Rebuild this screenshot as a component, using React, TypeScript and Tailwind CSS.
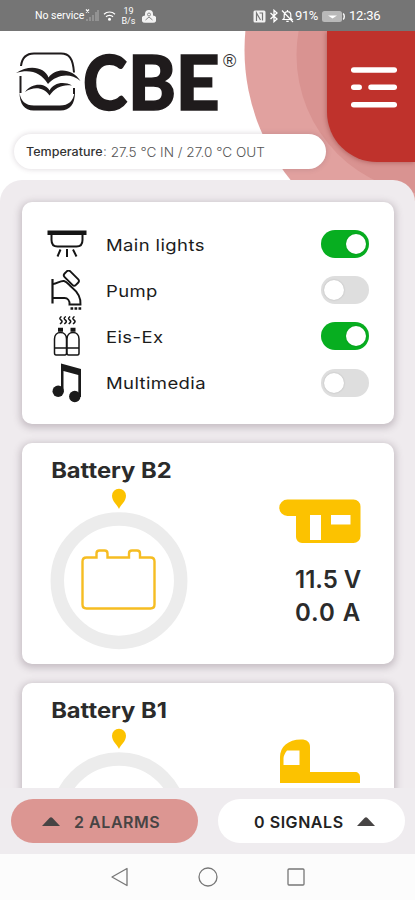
import type { ReactNode } from "react";

function StatusBar() {
  return (
    <div className="flex h-[31px] shrink-0 items-center bg-[#757575] pt-px pl-[35px] font-['Roboto',sans-serif] text-white">
      <span className="w-[50px] whitespace-nowrap text-[10.5px]">No service</span>
      <svg width="14" height="16" viewBox="0 0 14 16" className="shrink-0">
        <path d="M1 1.500l3 3M4 1.500l-3 3" stroke="#fff" strokeWidth="1.200" />
        <path
          d="M2 13v-2M5 13v-4M8 13V7M11 13V4M13 13V2"
          stroke="#9a9a9a"
          strokeWidth="1.600"
        />
      </svg>
      <svg
        width="13"
        height="12"
        viewBox="0 0 13 12"
        className="ml-[4px] shrink-0"
        fill="none"
        stroke="#fff"
        strokeWidth="1.200"
      >
        <path d="M1 4.200a8 8 0 0 1 11 0M3 6.800a5 5 0 0 1 7 0" />
        <circle cx="6.500" cy="9.300" r="1.500" fill="#fff" stroke="none" />
      </svg>
      <span className="ml-[4px] w-[17px] text-center text-[9px] leading-[10px]">
        19
        <br />
        B/s
      </span>
      <svg width="14" height="15" viewBox="0 0 14 15" className="ml-[5px] shrink-0">
        <path
          d="M7 1a4 4 0 0 1 4 4v1.500a3.600 3.600 0 0 1-.3 7.200H3.300a3.600 3.600 0 0 1-.3-7.200V5a4 4 0 0 1 4-4z"
          fill="#f2f2f2"
        />
        <circle cx="7" cy="5.500" r="1.500" fill="none" stroke="#8a8a8a" />
        <path d="M3.500 11l3.500-3 3.500 3" fill="none" stroke="#8a8a8a" />
      </svg>
      <svg width="13" height="13" viewBox="0 0 13 13" className="ml-[97px] shrink-0">
        <rect x="0.500" y="0.500" width="12" height="12" rx="1.500" fill="#f2f2f2" />
        <path
          d="M3.500 11V3l4 7M6.500 3h3v7.500"
          fill="none"
          stroke="#757575"
          strokeWidth="1.200"
        />
      </svg>
      <svg
        width="10"
        height="14"
        viewBox="0 0 10 14"
        className="ml-[3px] shrink-0"
        fill="none"
        stroke="#fff"
        strokeWidth="1.300"
      >
        <path d="M1.500 4l6.500 6-3 2.700V1.300L8 4l-6.500 6" />
      </svg>
      <svg
        width="13"
        height="14"
        viewBox="0 0 13 14"
        className="ml-[2px] shrink-0"
        fill="none"
        stroke="#fff"
        strokeWidth="1.200"
      >
        <path d="M2 10.500h9L9.800 9V6a3.300 3.300 0 0 0-6.600 0v3zM6.500 1v1.500M5.300 12.400h2.400M1 1.500l11 11.500" />
      </svg>
      <span className="ml-px w-[25px] whitespace-nowrap text-[13px] tracking-[-0.400px]">
        91%
      </span>
      <svg width="23" height="11" viewBox="0 0 23 11" className="ml-[2px] shrink-0">
        <rect width="20" height="11" rx="2.500" fill="#b9b9b9" />
        <path d="M21.200 2.500c1.400 1.500 1.400 4.500 0 6" fill="none" stroke="#fff" strokeWidth="1.400" />
        <path d="M6 4.500h9l-4.500 3z" fill="#fff" />
      </svg>
      <span className="ml-[4px] whitespace-nowrap text-[13px] tracking-[-0.200px]">12:36</span>
    </div>
  );
}

function Logo() {
  return (
    <svg width="224" height="84" viewBox="0 0 224 84" className="-mb-5 block overflow-visible">
      <g fill="none" stroke="#1f1b1c" strokeWidth="2">
        <path d="M6 17C7 8.500 11 4.500 19 4.500h27c8 0 12 4.500 13 19" />
        <path d="M5.500 27v17M59 39v6" />
      </g>
      <path
        d="M4.500 43c1 9 6 13.500 14.500 13.500h26c8.500 0 13.500-4.500 14.500-13.500h.5C60 55 55 61.500 45.500 61.500h-27C9.500 61.500 4.500 55 4.500 43z"
        fill="#1f1b1c"
      />
      <path
        d="M1 24c13-9 29-6 32.500 4.500C41 18.500 57 19 65.500 32 55 23.500 42 25.500 33 35 26 23.500 15 19.500 1 24z"
        fill="#1f1b1c"
      />
      <path
        d="M10 43c7-9.500 20.500-9 24.500-1.500C38.500 34 48.500 32 57 36.500c-9-1.500-17 2-22.500 10C29 38.500 19 37 10 43z"
        fill="#1f1b1c"
      />
      <g
        fontSize="77"
        fontWeight="900"
        fontFamily="Lato, sans-serif"
        fill="#1f1b1c"
        stroke="#1f1b1c"
        strokeWidth="1.500"
      >
        <text transform="translate(68 60.500) scale(.87 1)">C</text>
        <text transform="translate(113 60.500) scale(.94 1)">B</text>
        <text transform="translate(160.500 60.500)">E</text>
      </g>
      <text x="208" y="17.500" fontSize="18" fontFamily="Liberation Sans, sans-serif" fill="#333">
        ®
      </text>
    </svg>
  );
}

function MenuButton() {
  return (
    <button className="flex h-[131px] w-[88px] shrink-0 items-start justify-center rounded-bl-[50px] bg-[#bf322c] pt-[35px] pl-[5px] shadow-[-1px_1px_4px_rgba(120,30,30,0.35)]">
      <svg width="46" height="42" viewBox="0 0 46 42" fill="none" stroke="#fff" strokeWidth="5.500" strokeLinecap="round">
        <path d="M2.700 4h40.600M2.700 21.300h5.500M20 21.300h23.300M2.700 38.700h40.600" />
      </svg>
    </button>
  );
}

function Header() {
  return (
    <header className="relative flex h-[170px] justify-between overflow-hidden bg-white">
      <svg width="415" height="170" viewBox="0 31 415 170" className="absolute inset-0">
        <circle cx="451" cy="50" r="206.500" fill="#e1a19f" />
        <circle cx="436" cy="55" r="139.500" fill="#d99391" />
      </svg>
      <div className="relative flex flex-col">
        <div className="pt-[18px] pl-[15px]">
          <Logo />
        </div>
        <div className="mt-[21px] ml-[14px] flex h-[35px] w-[312px] items-center rounded-full bg-white pt-[2px] pl-[12px] shadow-[0_0_5px_1px_rgba(90,60,80,0.16)]">
          <span className="w-[77px] origin-left scale-x-[1.090] text-[11.500px] font-medium whitespace-nowrap text-[#333]">
            Temperature
          </span>
          <span className="origin-left scale-x-[1.070] text-[12.700px] font-light whitespace-pre text-[#555]">
            : 27.5 °C IN / 27.0 °C OUT
          </span>
        </div>
      </div>
      <div className="relative">
        <MenuButton />
      </div>
    </header>
  );
}

function LightIcon() {
  return (
    <svg width="40" height="28" viewBox="0 0 40 28" fill="none" stroke="#151515" strokeWidth="2">
      <path d="M.5 2.700h39" strokeWidth="4.500" />
      <path d="M4.500 5v5c0 4 2 6.500 6 6.500h19c4 0 6-2.500 6-6.500V5" />
      <path d="M13.500 19.500l-3 7M20 19v8M26 19.500l3.500 7" />
    </svg>
  );
}

function PumpIcon() {
  return (
    <svg width="40" height="40" viewBox="0 0 40 40" fill="none" stroke="#151515" strokeWidth="1.900">
      <path d="M5.500 9v24.500" strokeWidth="2.200" />
      <path d="M6 14c4 0 7-3.500 11-3 3 .5 4.500 3.500 8 6.500 5 4 9 8.500 8.500 17H22.500c.5-4-2-6.500-5-6.500H6" />
      <rect x="16.500" y="4.200" width="16" height="8" rx="2.500" transform="rotate(45 24.500 8)" />
      <path d="M23.500 38.500h11" strokeWidth="2.500" strokeDasharray="2.700 1.300" />
    </svg>
  );
}

function GasIcon() {
  return (
    <svg width="40" height="40" viewBox="0 0 40 40" fill="none" stroke="#151515" strokeWidth="1.500">
      <path d="M14.500 .5q-3 2 -.5 3.500t-1 4M18.800 .5q-3 2-.5 3.500t-1 4M23.200 .5q-3 2-.5 3.500t-1 4M27.500 .5q-3 2-.5 3.500t-1 4" />
      <path d="M11 13.700h5M23.500 13.700h5" strokeWidth="4" />
      <path d="M7.500 37V23c0-4 2.500-6.500 6-6.500s6 2.500 6 6.500v14c0 1-.5 2-1.500 2H9c-1 0-1.500-1-1.500-2zM20 37V23c0-4 2.500-6.500 6-6.500s6 2.500 6 6.500v14c0 1-.5 2-1.500 2h-9c-1 0-1.500-1-1.500-2zM7.500 32h24.500" />
    </svg>
  );
}

function MusicIcon() {
  return (
    <svg width="40" height="40" viewBox="0 0 40 40" fill="#1a1a1a">
      <path d="M14 .5l20 5.500V34h-2.700V12L16.500 8v20H14z" />
      <circle cx="11.200" cy="28.200" r="5.700" />
      <circle cx="27.800" cy="33.500" r="5.700" />
    </svg>
  );
}

function Toggle({ on }: { on: boolean }) {
  return (
    <span
      className={`flex h-[28px] w-[48px] items-center rounded-full px-[3px] ${
        on ? "justify-end bg-[#07ae20]" : "justify-start bg-[#dedede]"
      }`}
    >
      <span className="h-5 w-5 rounded-full bg-white shadow-[0_0_2px_rgba(0,0,0,0.2)]" />
    </span>
  );
}

const devices = [
  { name: "Main lights", icon: <LightIcon />, on: true },
  { name: "Pump", icon: <PumpIcon />, on: false },
  { name: "Eis-Ex", icon: <GasIcon />, on: true },
  { name: "Multimedia", icon: <MusicIcon />, on: false },
];

function Card({ children, className }: { children: ReactNode; className: string }) {
  return (
    <section
      className={`shrink-0 rounded-[10px] bg-white shadow-[0_2px_7px_2px_rgba(80,60,75,0.25)] ${className}`}
    >
      {children}
    </section>
  );
}

function DeviceCard() {
  return (
    <Card className="h-[222px] pt-[19px] pr-[25px] pl-[25px]">
      {devices.map((d) => (
        <div key={d.name} className="flex h-[46.200px] items-center justify-between">
          <span className="flex items-center gap-[19px]">
            {d.icon}
            <span className="origin-left scale-x-[1.120] pt-[2px] text-[16.500px] tracking-[0.350px] text-[#1c1c1c]">
              {d.name}
            </span>
          </span>
          <Toggle on={d.on} />
        </div>
      ))}
    </Card>
  );
}

function Gauge() {
  return (
    <svg width="138" height="164" viewBox="50 487 138 164" className="block">
      <path
        d="M119 509c-1.500-4-7-7.500-7-13.300a7 7 0 0 1 14 0c0 5.800-5.500 9.300-7 13.300z"
        fill="#fcc200"
      />
      <circle cx="119" cy="580.700" r="61.700" fill="none" stroke="#ececec" strokeWidth="13.500" />
      <path
        d="M86.500 557.500h10v-4c0-2 1-3 3-3h5c2 0 3 1 3 3v4h21.500v-4c0-2 1-3 3-3h5c2 0 3 1 3 3v4h10.500c2.500 0 4 1.500 4 4v43c0 2.500-1.500 4-4 4h-64c-2.500 0-4-1.500-4-4v-43c0-2.500 1.500-4 4-4z"
        fill="none"
        stroke="#f6bd22"
        strokeWidth="2.400"
      />
    </svg>
  );
}

function CaravanIcon() {
  return (
    <svg width="82" height="45" viewBox="0 0 82 45" className="block">
      <path
        fillRule="evenodd"
        fill="#fcc200"
        d="M8.500 .5h66a7 7 0 0 1 7 7V37a7 7 0 0 1-7 7H23a6 6 0 0 1-6-6V17H8.500A8 8 0 0 1 8.500 .5zM31 16v25h11V16zM52 16v9.500H71.500V16z"
      />
    </svg>
  );
}

function CamperIcon() {
  return (
    <svg width="82" height="45" viewBox="0 0 82 45" className="block">
      <path
        fillRule="evenodd"
        fill="#fcc200"
        d="M1 44V18C1 8 9 .5 22 .5c6 0 9 2.500 9 7.500v25h45c3 0 5 2 5 5v6zM4.500 26H20.500V11.500H8c-2.500 3-3.500 6-3.500 8z"
      />
    </svg>
  );
}

type BatteryProps = { name: string; icon: ReactNode; readings?: string[] };

function BatteryCard({ name, icon, readings = [] }: BatteryProps) {
  return (
    <Card className="flex h-[221px] justify-between pr-[33px] pl-[28px]">
      <div>
        <h2 className="mt-[15px] origin-left scale-x-[1.130] pl-px text-[21px] leading-[26px] font-bold whitespace-nowrap text-[#2b2b2b]">
          {name}
        </h2>
        <div className="mt-[3px]">
          <Gauge />
        </div>
      </div>
      <div className="flex flex-col items-end pt-[56px]">
        <div className="mb-[20px]">{icon}</div>
        {readings.map((r) => (
          <span
            key={r}
            className="w-[66px] text-[24px] leading-[32.500px] font-semibold whitespace-nowrap text-[#2b2b2b] last:tracking-[0.900px]"
          >
            {r}
          </span>
        ))}
      </div>
    </Card>
  );
}

function Triangle() {
  return (
    <svg width="18" height="9" viewBox="0 0 18 9" className="shrink-0">
      <path d="M0 9L7.500 1q1.500-1.500 3 0L18 9z" fill="#474444" />
    </svg>
  );
}

function Footer() {
  return (
    <footer className="flex h-[66px] shrink-0 items-start bg-[#efecef] pt-[11px] pl-[11px] text-[16px] font-semibold">
      <button className="flex h-[44px] w-[187px] items-center rounded-full bg-[#dc9692] pl-[31px] text-[#474444]">
        <Triangle />
        <span className="ml-[14px] pt-px tracking-[0.550px] whitespace-nowrap">2 ALARMS</span>
      </button>
      <button className="ml-5 flex h-[44px] w-[187px] items-center rounded-full bg-white pl-[36px] text-[#222]">
        <span className="pt-px tracking-[0.550px] whitespace-nowrap">0 SIGNALS</span>
        <span className="mr-[30px] ml-auto">
          <Triangle />
        </span>
      </button>
    </footer>
  );
}

function NavBar() {
  return (
    <nav className="flex h-[46px] shrink-0 items-center justify-center bg-[#fcfcfc]">
      <svg width="200" height="24" viewBox="0 0 200 24" fill="none" stroke="#777" strokeWidth="1.300">
        <path d="M19 3.500v17L4 12z" strokeLinejoin="round" />
        <circle cx="100" cy="12" r="9" />
        <rect x="180" y="4" width="16" height="16" rx="1" />
      </svg>
    </nav>
  );
}

export default function App() {
  return (
    <div className="flex h-[900px] w-[415px] flex-col overflow-hidden bg-white font-['Inter',sans-serif]">
      <StatusBar />
      <Header />
      <main className="relative -mt-[21px] flex min-h-0 flex-1 flex-col gap-[19px] overflow-hidden rounded-t-[22px] bg-[#efebee] pt-[22px] pr-[21px] pl-[22px]">
        <DeviceCard />
        <BatteryCard name="Battery B2" icon={<CaravanIcon />} readings={["11.5 V", "0.0 A"]} />
        <BatteryCard name="Battery B1" icon={<CamperIcon />} />
      </main>
      <Footer />
      <NavBar />
    </div>
  );
}
